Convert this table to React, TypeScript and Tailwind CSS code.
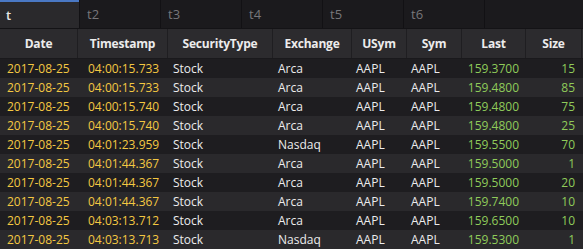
import React from 'react';

type Row = [string, string, string, string, string, string, string, string];

const rows: Row[] = [
  ['2017-08-25', '04:00:15.733', 'Stock', 'Arca', 'AAPL', 'AAPL', '159.3700', '15'],
  ['2017-08-25', '04:00:15.733', 'Stock', 'Arca', 'AAPL', 'AAPL', '159.4800', '85'],
  ['2017-08-25', '04:00:15.740', 'Stock', 'Arca', 'AAPL', 'AAPL', '159.4800', '75'],
  ['2017-08-25', '04:00:15.740', 'Stock', 'Arca', 'AAPL', 'AAPL', '159.4800', '25'],
  ['2017-08-25', '04:01:23.959', 'Stock', 'Nasdaq', 'AAPL', 'AAPL', '159.5500', '70'],
  ['2017-08-25', '04:01:44.367', 'Stock', 'Arca', 'AAPL', 'AAPL', '159.5000', '1'],
  ['2017-08-25', '04:01:44.367', 'Stock', 'Arca', 'AAPL', 'AAPL', '159.5000', '20'],
  ['2017-08-25', '04:01:44.367', 'Stock', 'Arca', 'AAPL', 'AAPL', '159.7400', '10'],
  ['2017-08-25', '04:03:13.712', 'Stock', 'Arca', 'AAPL', 'AAPL', '159.6500', '10'],
  ['2017-08-25', '04:03:13.713', 'Stock', 'Nasdaq', 'AAPL', 'AAPL', '159.5300', '1'],
];

const headers = ['Date', 'Timestamp', 'SecurityType', 'Exchange', 'USym', 'Sym', 'Last', 'Size'];
const widths = ['w-[78px]', 'w-[90px]', 'w-[105px]', 'w-[79px]', 'w-[55px]', 'w-[55px]', 'w-[64px]', 'w-[56px]'];
const tabs = ['t', 't2', 't3', 't4', 't5', 't6'];

export default function App() {
  return (
    <div className="w-[583px] h-[249px] overflow-hidden bg-[#1e1d20] text-[12px] leading-none" style={{ fontFamily: '"Open Sans", sans-serif' }}>
      {/* tab strip */}
      <div className="flex h-[29px] bg-[#1b1a1d] border-b border-[#141316]">
        {tabs.map((t, i) => (
          <div
            key={t}
            className={
              i === 0
                ? 'w-[79px] flex items-center pl-[6px] bg-[#2a292c] border-t-2 border-[#4a78c4] text-[13px] text-[#e6e6e6] font-semibold'
                : 'w-[81px] flex items-center pl-[7px] border-l border-[#121114] text-[13px] text-[#77767a]'
            }
          >
            {t}
          </div>
        ))}
        <div className="flex-1 border-l border-[#121114]" />
      </div>

      {/* header */}
      <div className="flex h-[30px] bg-[#2c2b2e] border-b border-[#1a191c]">
        {headers.map((h, i) => (
          <div key={h} className={`${widths[i]} flex items-center justify-center font-bold text-[12px] tracking-[-0.2px] text-[#ececec] border-r border-[#1f1e21]`}>
            {h}
          </div>
        ))}
      </div>

      {/* rows */}
      {rows.map((r, i) => (
        <div key={i} className={`flex h-[19px] items-center font-medium ${i % 2 === 0 ? 'bg-[#1e1d20]' : 'bg-[#2a292c]'}`}>
          <div className="w-[78px] pl-[7px] text-[#f4c842]">{r[0]}</div>
          <div className="w-[90px] pl-[10px] text-[#f4c842]">{r[1]}</div>
          <div className="w-[105px] pl-[5px] text-[#ececec]">{r[2]}</div>
          <div className="w-[79px] pl-[5px] text-[#ececec]">{r[3]}</div>
          <div className="w-[55px] pl-[4px] text-[#ececec]">{r[4]}</div>
          <div className="w-[55px] pl-[4px] text-[#ececec]">{r[5]}</div>
          <div className="w-[64px] pr-[7px] text-right text-[#8fcb5a]">{r[6]}</div>
          <div className="w-[56px] pr-[7px] text-right text-[#8fcb5a]">{r[7]}</div>
        </div>
      ))}
    </div>
  );
}
